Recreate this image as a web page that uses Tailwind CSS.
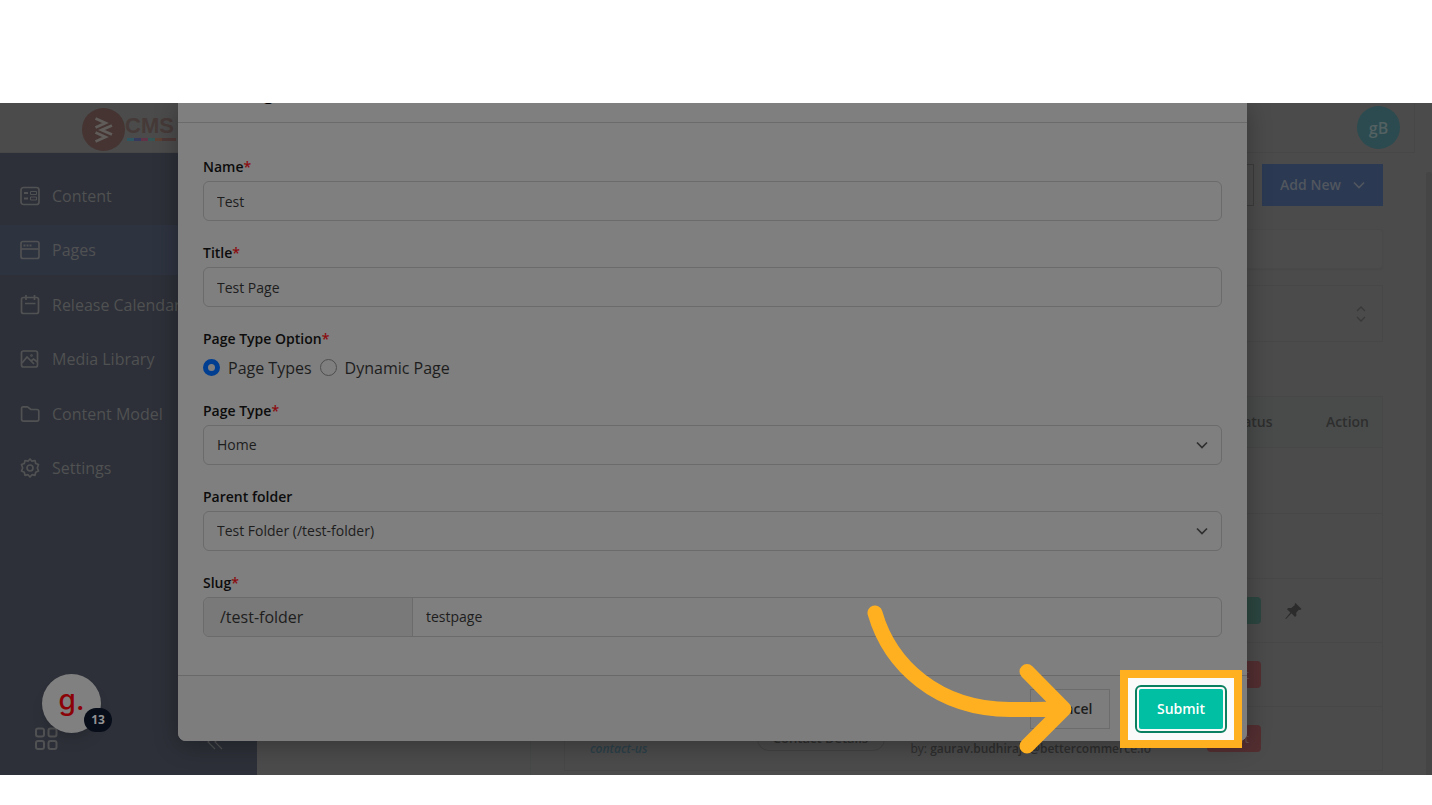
<!DOCTYPE html>
<html lang="en">
<head>
<meta charset="utf-8">
<title>CMS Pages</title>
<script src="https://cdn.jsdelivr.net/npm/@tailwindcss/browser@4"></script>
</head>
<body class="flex h-screen flex-col overflow-hidden bg-white pt-[103px] pb-[30px] font-['Open_Sans','Noto_Sans',sans-serif] text-sm">
<div class="relative flex min-h-0 flex-1 flex-col overflow-hidden bg-[#4b4b4b] text-[#2e2e2e]">

  <header class="mr-[17px] flex h-[50px] shrink-0 items-center justify-between border-r border-b border-[#474747] pr-[14px] pl-[82px]">
    <a href="#" class="flex items-center text-[#463a38]">
      <svg class="mt-1 size-[43px]" viewBox="0 0 43 43" fill="none"><circle cx="21.500" cy="21.500" r="21.500" fill="#453431"/><path d="M13.500 10.500 23.500 15 13.500 19.500M30 17.500 19.500 22 30 26.500M13.500 24.500 23.500 29 13.500 33.500" stroke="#5f5c5a" stroke-width="2.800"/></svg>
      <span class="flex flex-col"><span class="font-['Liberation_Sans',sans-serif] text-[22px] leading-6 font-bold">CMS</span>
      <span class="ml-0.5 flex h-[3px] w-[49px]"><i class="flex-1 bg-[#2e5661]"></i><i class="flex-1 bg-[#35395b]"></i><i class="flex-1 bg-[#603446]"></i><i class="flex-1 bg-[#335554]"></i><i class="flex-1 bg-[#5c4034]"></i><i class="flex-[2] bg-[#4c3836]"></i></span></span>
    </a>
    <button class="size-[43px] rounded-full bg-[#2c4b50] text-base font-semibold text-[#536162]">gB</button>
  </header>

  <div class="flex min-h-0 flex-1">
    <aside class="flex w-[257px] shrink-0 flex-col justify-between bg-[#2d3038] pt-[18px] pb-6 text-base text-[#505152]">
      <nav class="flex h-[322px] flex-col justify-between">
        <a href="#" class="flex h-[50px] items-center gap-3 pl-5"><svg class="size-5" viewBox="0 0 20 20" fill="none" stroke="currentColor" stroke-width="1.700"><rect x="1" y="1.500" width="18" height="17" rx="2.500"/><path d="M4 7h4M4 12.500h4" stroke-width="2"/><path d="M10.500 5.500h6v3h-6zM10.500 11h6v3h-6z" stroke-width="1"/></svg>Content</a>
        <a href="#" class="flex h-[50px] items-center gap-3 bg-[#2e3340] pl-5"><svg class="size-5" viewBox="0 0 20 20" fill="none" stroke="currentColor" stroke-width="1.700"><rect x="1" y="1.500" width="18" height="17" rx="2"/><path d="M1 9h18"/><path d="M3.500 5.500h8" stroke-width="2" stroke-dasharray="2 1"/></svg>Pages</a>
        <a href="#" class="flex h-[50px] items-center gap-3 pl-5"><svg class="size-5" viewBox="0 0 20 20" fill="none" stroke="currentColor" stroke-width="1.700"><rect x="1.500" y="2.500" width="17" height="16" rx="2"/><path d="M6 0v5M14.500 0v5M5 8.500h10.500"/></svg>Release Calendar</a>
        <a href="#" class="flex h-[50px] items-center gap-3 pl-5"><svg class="size-5" viewBox="0 0 20 20" fill="none" stroke="currentColor" stroke-width="1.700"><rect x="1.500" y="2" width="16" height="16" rx="2"/><path d="m2 14 5-6 7 7M11 12l2.500-2 4 3"/><circle cx="11.500" cy="6.500" r=".5"/></svg>Media Library</a>
        <a href="#" class="flex h-[50px] items-center gap-3 pl-5"><svg class="size-5" viewBox="0 0 20 20" fill="none" stroke="currentColor" stroke-width="1.700" stroke-linejoin="round"><path d="M3 2.800h4.500l3.500 2.700h6q1.800 0 1.800 1.800v8q0 1.900-1.800 1.900H3.500q-1.900 0-1.900-1.900V4.500q0-1.700 1.400-1.700z"/></svg>Content Model</a>
        <a href="#" class="flex h-[50px] items-center gap-3 pl-5"><svg class="size-5" viewBox="0 0 20 20" fill="none" stroke="currentColor" stroke-width="1.700" stroke-linejoin="round"><path d="m10 1 2 2.200 3-.7.700 3 2.800 1L17.300 10l1.200 3-2.800 1.200-.7 3.100-3-.6L10 19l-2-2.300-3 .6-.7-3.100L1.500 13l1.200-3-1.200-3.500 2.800-1 .7-3 3 .7z"/><circle cx="10" cy="10" r="3"/></svg>Settings</a>
      </nav>
      <div class="flex items-end justify-between pr-[34px] pl-[35px]">
        <svg class="size-6" viewBox="0 0 24 24" fill="none" stroke="currentColor" stroke-width="2"><rect x="1" y="1.500" width="8" height="8" rx="2"/><rect x="13.500" y="1.500" width="8" height="8" rx="2"/><rect x="1" y="14" width="8" height="8" rx="2"/><rect x="13.500" y="14" width="8" height="8" rx="2"/></svg>
        <svg class="h-4 w-4" viewBox="0 0 16 16" fill="none" stroke="currentColor" stroke-width="1.200"><path d="M8 0 1 7l7 7M15 0 8 7l7 7"/></svg>
      </div>
    </aside>

    <main class="flex min-w-0 flex-1">
      <div class="w-[274px] shrink-0 border-r border-[#474848]"></div>
      <div class="min-w-0 flex-1 pt-[11px] pr-[49px] pl-[33px]">
        <div class="flex justify-end gap-2">
          <button class="h-[42px] w-24 border border-[#3c3c3c]" aria-label="More actions"></button>
          <button class="flex h-[42px] w-[121px] items-center justify-center gap-3 bg-[#2b3a52] text-sm font-semibold text-[#51565f]">Add New<svg class="size-3" viewBox="0 0 12 12" fill="none" stroke="currentColor" stroke-width="1.600"><path d="m1 3.500 5 5 5-5"/></svg></button>
        </div>
        <div class="mt-[23px] h-10 rounded-sm border border-[#494949] bg-[#4c4c4c] shadow-xs"></div>
        <div class="mt-4 flex h-[57px] items-center justify-end border border-[#474747] pr-4">
          <svg class="h-4 w-[10px]" viewBox="0 0 10 16" fill="none" stroke="#393939" stroke-width="1.300"><path d="m1 5 4-4 4 4M1 11l4 4 4-4"/></svg>
        </div>
        <table class="mt-[54px] w-full table-fixed border-collapse border border-[#474747] text-sm">
          <colgroup><col class="w-[167px]"><col><col class="w-[276px]"><col class="w-[98px]"><col class="w-[98px]"></colgroup>
          <thead><tr class="h-[51px] bg-[#484b4a]"><th></th><th></th><th></th><th class="pr-3 text-right font-semibold">Status</th><th class="pr-[13px] text-right font-semibold">Action</th></tr></thead>
          <tbody>
            <tr class="h-[66px] border-t border-[#474747]"><td colspan="5"></td></tr>
            <tr class="h-[65px] border-t border-[#474747]"><td colspan="5"></td></tr>
            <tr class="h-16 border-t border-[#474747]"><td></td><td></td><td></td><td class="pl-5"><span class="flex h-[27px] w-[54px] items-center justify-center rounded-sm bg-[#2c4640] text-[13px] text-[#4b5551]">Live</span></td><td><svg class="size-[18px]" viewBox="0 0 18 18" fill="#2c2c2c"><path d="m10.500 1 6 6-1.400 1-1.300-.3-2.600 3 .2 3.100-1.400 1.200-3.500-3.700L1 17l-.6-.4 5-6L2 7.200l1.200-1.300 3.100.1 3.600-2.900-.3-1.200z"/></svg></td></tr>
            <tr class="h-16 border-t border-[#474747]"><td></td><td></td><td></td><td class="pl-5"><span class="flex h-[27px] w-[54px] items-center justify-center rounded-sm bg-[#532e31] text-[13px] text-[#655052]">Draft</span></td><td></td></tr>
            <tr class="h-16 border-t border-[#474747]"><td class="pt-5 pl-[25px] text-xs leading-5 font-semibold text-[#2b4049] italic"><a href="#">contact-us</a></td><td class="pl-[25px]"><span class="flex h-6 w-[128px] items-center justify-center rounded-full border border-[#424242] text-[13px] font-semibold">Contact Details</span></td><td class="pt-5 text-xs leading-5 whitespace-nowrap">by: <b class="font-semibold">gaurav.budhiraja@bettercommerce.io</b></td><td class="pl-5"><span class="flex h-[27px] w-[54px] items-center justify-center rounded-sm bg-[#532e31] text-[13px] text-[#655052]">Draft</span></td><td></td></tr>
          </tbody>
        </table>
      </div>
    </main>
  </div>

  <div class="absolute top-[69px] right-0 bottom-0 w-[6px] rounded-t-sm bg-[#454545]"></div>

  <button class="absolute bottom-[42px] left-[42px] flex size-[59px] items-center justify-center rounded-full bg-[#808080] pb-2 font-['Inter',sans-serif] text-[28px] leading-8 font-medium text-[#8b0207] shadow-lg">g.
    <span class="absolute top-[34px] left-[42px] flex h-6 w-7 items-center justify-center rounded-full bg-[#070d19] font-['Open_Sans',sans-serif] text-xs font-bold text-[#929294]">13</span>
  </button>

  <section role="dialog" aria-label="Add Page" class="absolute top-0 right-[185px] left-[178px] rounded-b-lg bg-[#7f7f7f] text-sm text-[#1d1d1d] shadow-[0_4px_24px_#0000004d]">
    <div class="flex h-5 items-end border-b border-[#6b6b6b] pl-[25px]"><h2 class="mb-[17px] text-lg leading-6 font-semibold text-black">Add Page</h2></div>
    <form class="flex flex-col gap-[22px] pt-[34px] pr-[25px] pb-[38px] pl-[25px]">
      <div class="flex flex-col gap-1">
        <label for="name" class="leading-5 font-semibold text-[#0c0c0c]">Name<span class="text-[#8b0c10]">*</span></label>
        <input id="name" value="Test" class="h-10 rounded-md border border-[#6b6b6b] px-[13px]">
      </div>
      <div class="flex flex-col gap-1">
        <label for="title" class="leading-5 font-semibold text-[#0c0c0c]">Title<span class="text-[#8b0c10]">*</span></label>
        <input id="title" value="Test Page" class="h-10 rounded-md border border-[#6b6b6b] px-[13px]">
      </div>
      <fieldset>
        <legend class="leading-5 font-semibold text-[#0c0c0c]">Page Type Option<span class="text-[#8b0c10]">*</span></legend>
        <div class="flex h-[30px] items-center gap-2 pt-[7px] text-base">
          <input id="static" type="radio" name="kind" checked class="size-[17px] appearance-none rounded-full border border-[#4e4e4e] checked:border-[5px] checked:border-[#003e91]">
          <label for="static">Page Types</label>
          <input id="dynamic" type="radio" name="kind" class="size-[17px] appearance-none rounded-full border border-[#4e4e4e]">
          <label for="dynamic">Dynamic Page</label>
        </div>
      </fieldset>
      <div class="flex flex-col gap-1">
        <label for="type" class="leading-5 font-semibold text-[#0c0c0c]">Page Type<span class="text-[#8b0c10]">*</span></label>
        <div class="relative"><select id="type" class="block h-10 w-full appearance-none rounded-md border border-[#6b6b6b] px-[13px]"><option>Home</option></select>
        <svg class="pointer-events-none absolute top-[14px] right-[14px] size-3" viewBox="0 0 12 12" fill="none" stroke="#303030" stroke-width="1.700"><path d="m1 3.500 5 5 5-5"/></svg></div>
      </div>
      <div class="flex flex-col gap-1">
        <label for="folder" class="leading-5 font-semibold text-[#0c0c0c]">Parent folder</label>
        <div class="relative"><select id="folder" class="block h-10 w-full appearance-none rounded-md border border-[#6b6b6b] px-[13px]"><option>Test Folder (/test-folder)</option></select>
        <svg class="pointer-events-none absolute top-[14px] right-[14px] size-3" viewBox="0 0 12 12" fill="none" stroke="#303030" stroke-width="1.700"><path d="m1 3.500 5 5 5-5"/></svg></div>
      </div>
      <div class="flex flex-col gap-1">
        <label for="slug" class="leading-5 font-semibold text-[#0c0c0c]">Slug<span class="text-[#8b0c10]">*</span></label>
        <div class="flex h-10 rounded-md border border-[#6b6b6b]">
          <span class="flex w-[209px] items-center rounded-l-md border-r border-[#6b6b6b] bg-[#797979] pl-4 text-base">/test-folder</span>
          <input id="slug" value="testpage" class="min-w-0 flex-1 px-[13px]">
        </div>
      </div>
    </form>
    <div class="relative flex h-[66px] items-center justify-end gap-[29px] rounded-b-lg border-t border-[#696969] bg-[#7d7d7d] pr-6">
      <button class="h-10 w-20 border border-[#6c6c6c] font-semibold">Cancel</button>
      <div class="relative">
        <div class="absolute -inset-[19px] border-8 border-[#ffb020] bg-[#fafafa]"></div>
        <button class="relative block h-10 w-[84px] rounded-[2px] bg-[#00bfa2] font-semibold text-white outline-2 outline-offset-2 outline-[#0b8060]">Submit</button>
      </div>
      <svg class="pointer-events-none absolute right-[171px] -bottom-[15px] h-[152px] w-[210px]" viewBox="0 0 210 152" fill="none" stroke="#ffb020" stroke-width="15" stroke-linecap="round" stroke-linejoin="round"><path d="M9 9C24 61 71 105 144 105.500C164 105.700 182 105 197 104.500M161 67.500 198 105 161 142"/></svg>
    </div>
  </section>
</div>
</body>
</html>
